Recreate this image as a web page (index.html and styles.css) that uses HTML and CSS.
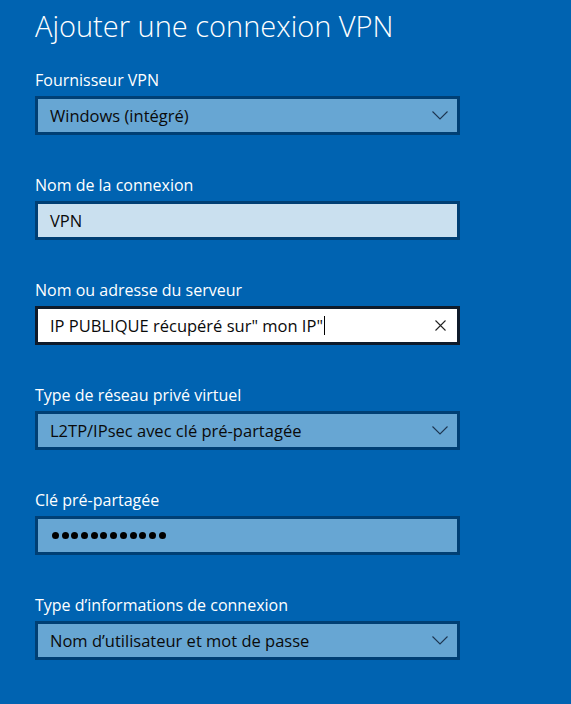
FILE: index.html
```html
<!DOCTYPE html>
<html lang="fr">
<head>
<meta charset="utf-8">
<title>Ajouter une connexion VPN</title>
<link rel="stylesheet" href="styles.css">
</head>
<body>
<main class="panel">
  <h1 class="title">Ajouter une connexion VPN</h1>

  <div class="field">
    <div class="label">Fournisseur VPN</div>
    <div class="box select">
      <span class="value">Windows (intégré)</span>
      <svg class="chev" width="16" height="9" viewBox="0 0 16 9"><polyline points="0.5,0.5 8,8 15.5,0.5" fill="none" stroke="#1d3550" stroke-width="1.1"/></svg>
    </div>
  </div>

  <div class="field">
    <div class="label">Nom de la connexion</div>
    <div class="box text">
      <span class="value">VPN</span>
    </div>
  </div>

  <div class="field">
    <div class="label">Nom ou adresse du serveur</div>
    <div class="box focus">
      <span class="value">IP PUBLIQUE récupéré sur" mon IP"</span><span class="caret"></span>
      <svg class="clear" width="11" height="11" viewBox="0 0 11 11"><path d="M0.5 0.5 L10.5 10.5 M10.5 0.5 L0.5 10.5" stroke="#222" stroke-width="1.1" fill="none"/></svg>
    </div>
  </div>

  <div class="field">
    <div class="label">Type de réseau privé virtuel</div>
    <div class="box select">
      <span class="value">L2TP/IPsec avec clé pré-partagée</span>
      <svg class="chev" width="16" height="9" viewBox="0 0 16 9"><polyline points="0.5,0.5 8,8 15.5,0.5" fill="none" stroke="#1d3550" stroke-width="1.1"/></svg>
    </div>
  </div>

  <div class="field">
    <div class="label">Clé pré-partagée</div>
    <div class="box select">
      <span class="dots"><i></i><i></i><i></i><i></i><i></i><i></i><i></i><i></i><i></i><i></i><i></i><i></i></span>
    </div>
  </div>

  <div class="field">
    <div class="label">Type d’informations de connexion</div>
    <div class="box select">
      <span class="value">Nom d’utilisateur et mot de passe</span>
      <svg class="chev" width="16" height="9" viewBox="0 0 16 9"><polyline points="0.5,0.5 8,8 15.5,0.5" fill="none" stroke="#1d3550" stroke-width="1.1"/></svg>
    </div>
  </div>
</main>
</body>
</html>
```

FILE: styles.css
```css
html, body {
  margin: 0;
  padding: 0;
  background: #0063b1;
}
body {
  width: 571px;
  height: 704px;
  overflow: hidden;
  font-family: "Open Sans", "Noto Sans", sans-serif;
  color: #ffffff;
}
.panel {
  padding: 6px 0 0 35px;
  width: 425px;
}
.title {
  margin: 0 0 23px 0;
  font-size: 29px;
  font-weight: 300;
  line-height: 40px;
  white-space: nowrap;
}
.field {
  margin-bottom: 39px;
}
.label {
  font-size: 16px;
  line-height: 22px;
  margin-bottom: 5px;
  white-space: nowrap;
}
.box {
  box-sizing: border-box;
  height: 39px;
  border: 3px solid #003f74;
  display: flex;
  align-items: center;
  padding: 0 9px 0 12px;
  color: #0a0a0a;
  font-size: 16.5px;
  position: relative;
}
.select {
  background: #67a6d3;
}
.text {
  background: #cae0ef;
}
.focus {
  background: #ffffff;
  border-color: #0e1b2b;
  padding-right: 11px;
}
.value {
  white-space: nowrap;
  flex: 0 0 auto;
}
.chev {
  margin-left: auto;
  flex: 0 0 auto;
}
.clear {
  margin-left: auto;
  flex: 0 0 auto;
}
.caret {
  display: inline-block;
  width: 1px;
  height: 19px;
  background: #000;
  margin-left: 1px;
}
.dots {
  display: flex;
  gap: 2.7px;
  margin-left: 2px;
}
.dots i {
  display: block;
  width: 7px;
  height: 7px;
  border-radius: 50%;
  background: #000;
}
```
